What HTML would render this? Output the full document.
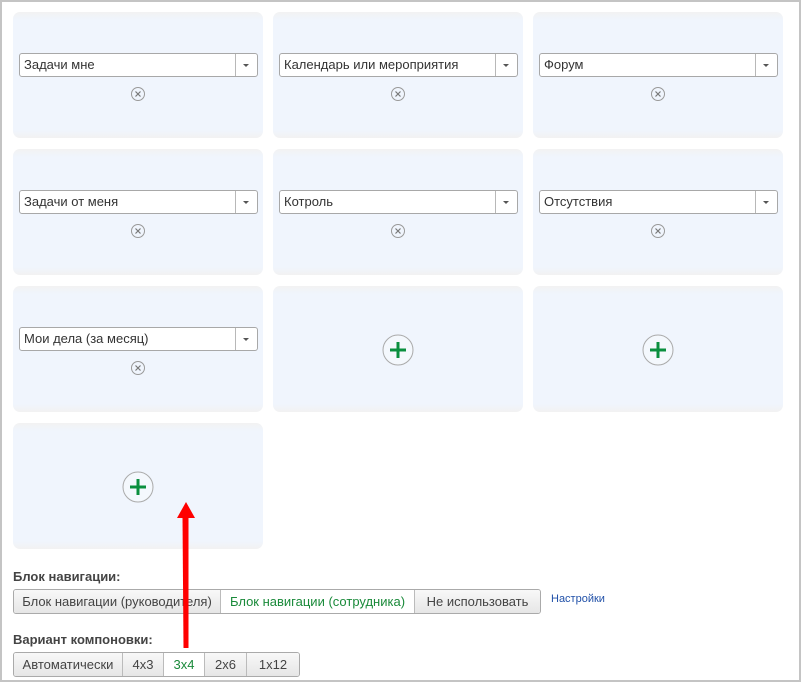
<!DOCTYPE html><html><head><meta charset="utf-8"><style>
body{margin:0;width:801px;height:682px;background:#fff;font-family:"Liberation Sans",sans-serif;position:relative;overflow:hidden}
.frame{position:absolute;left:0;top:0;width:797px;height:678px;border:2px solid #c4c4c4}
.tile{position:absolute;width:250px;height:126px;border-radius:7px;background:linear-gradient(#f2f2f2 0,#f0f5fd 8px,#f0f5fd 118px,#f2f2f2 126px)}
.dd{position:absolute;left:6px;top:41px;width:239px;height:24px;box-sizing:border-box;border:1px solid #a8a8a8;border-radius:3px;background:#fff;font-size:13px;color:#333;line-height:22px;padding-left:4px;white-space:nowrap}
.dd:after{content:"";position:absolute;right:0;top:0;width:21px;height:22px;border-left:1px solid #b8b8b8}
.dd i{position:absolute;right:8px;top:10px;border-left:3px solid transparent;border-right:3px solid transparent;border-top:3px solid #555}
.x{position:absolute;left:118px;top:75px}
.plus{position:absolute;left:109px;top:48px}
.lbl{position:absolute;left:13px;font-weight:bold;font-size:13px;color:#444}
.grp{position:absolute;left:13px;display:flex;height:23px;border:1px solid #aaa;border-radius:3px;overflow:hidden}
.grp span{display:block;box-sizing:border-box;white-space:nowrap;text-align:center;overflow:hidden;font-size:13px;line-height:23px;color:#444;background:linear-gradient(#f8f8f8,#e6e6e6);border-left:1px solid #bbb}
.grp span:first-child{border-left:none}
.grp span.on{background:#fff;color:#1a8a3a}
</style></head><body><div class="frame"></div>
<svg width="0" height="0" style="position:absolute"><defs>
<g id="xx"><circle cx="7" cy="7" r="6.5" fill="none" stroke="#999"/><path d="M4.5 4.5L9.5 9.5M9.5 4.5L4.5 9.5" stroke="#777" stroke-width="1.2"/></g>
<g id="pp"><circle cx="16" cy="16" r="15" fill="#fff" fill-opacity=".3" stroke="#aaa"/><path d="M16 8V24M8 16H24" stroke="#0a8f3f" stroke-width="3"/></g></defs></svg>
<div class="tile" style="left:13px;top:12px"><div class="dd">Задачи мне<i></i></div><svg class="x" width="14" height="14"><use href="#xx"/></svg></div>
<div class="tile" style="left:273px;top:12px"><div class="dd">Календарь или мероприятия<i></i></div><svg class="x" width="14" height="14"><use href="#xx"/></svg></div>
<div class="tile" style="left:533px;top:12px"><div class="dd">Форум<i></i></div><svg class="x" width="14" height="14"><use href="#xx"/></svg></div>
<div class="tile" style="left:13px;top:149px"><div class="dd">Задачи от меня<i></i></div><svg class="x" width="14" height="14"><use href="#xx"/></svg></div>
<div class="tile" style="left:273px;top:149px"><div class="dd">Котроль<i></i></div><svg class="x" width="14" height="14"><use href="#xx"/></svg></div>
<div class="tile" style="left:533px;top:149px"><div class="dd">Отсутствия<i></i></div><svg class="x" width="14" height="14"><use href="#xx"/></svg></div>
<div class="tile" style="left:13px;top:286px"><div class="dd">Мои дела (за месяц)<i></i></div><svg class="x" width="14" height="14"><use href="#xx"/></svg></div>
<div class="tile" style="left:273px;top:286px"><svg class="plus" width="32" height="32"><use href="#pp"/></svg></div>
<div class="tile" style="left:533px;top:286px"><svg class="plus" width="32" height="32"><use href="#pp"/></svg></div>
<div class="tile" style="left:13px;top:423px"><svg class="plus" width="32" height="32"><use href="#pp"/></svg></div>
<div class="lbl" style="top:569px">Блок навигации:</div>
<div class="grp" style="top:589px"><span style="width:206px">Блок навигации (руководителя)</span><span class="on" style="width:194px">Блок навигации (сотрудника)</span><span style="width:126px">Не использовать</span></div>
<div style="position:absolute;left:551px;top:593px;font-size:11px;color:#2050a8">Настройки</div>
<div class="lbl" style="top:632px">Вариант компоновки:</div>
<div class="grp" style="top:652px"><span style="width:108px">Автоматически</span><span style="width:41px">4x3</span><span class="on" style="width:41px">3x4</span><span style="width:42px">2x6</span><span style="width:53px">1x12</span></div>
<svg style="position:absolute;left:0;top:0" width="801" height="682"><path d="M182.5 517L183.5 648L188.5 648L188.5 517Z" fill="#f00"/><path d="M177 518L186 502L195 518Z" fill="#f00"/></svg>
</body></html>
